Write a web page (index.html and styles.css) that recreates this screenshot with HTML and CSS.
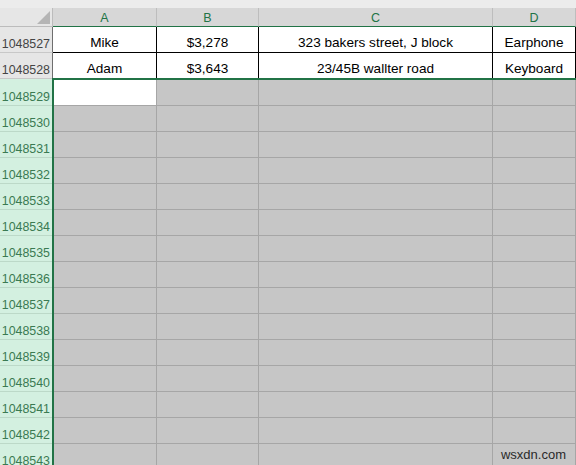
FILE: index.html
```html
<!DOCTYPE html>
<html>
<head>
<meta charset="utf-8">
<link rel="stylesheet" href="styles.css">
</head>
<body>
<div class="sheet">
  <div class="grid">
    <div class="strip"></div>

    <div class="corner"><span class="tri"></span></div>
    <div class="ch">A</div>
    <div class="ch">B</div>
    <div class="ch">C</div>
    <div class="ch">D</div>

    <div class="rh">1048527</div>
    <div class="dc">Mike</div>
    <div class="dc">$3,278</div>
    <div class="dc">323 bakers street, J block</div>
    <div class="dc">Earphone</div>

    <div class="rh">1048528</div>
    <div class="dc">Adam</div>
    <div class="dc">$3,643</div>
    <div class="dc">23/45B wallter road</div>
    <div class="dc">Keyboard</div>

    <div class="rh sel">1048529</div><div class="gc active"></div><div class="gc"></div><div class="gc"></div><div class="gc"></div>
    <div class="rh sel">1048530</div><div class="gc"></div><div class="gc"></div><div class="gc"></div><div class="gc"></div>
    <div class="rh sel">1048531</div><div class="gc"></div><div class="gc"></div><div class="gc"></div><div class="gc"></div>
    <div class="rh sel">1048532</div><div class="gc"></div><div class="gc"></div><div class="gc"></div><div class="gc"></div>
    <div class="rh sel">1048533</div><div class="gc"></div><div class="gc"></div><div class="gc"></div><div class="gc"></div>
    <div class="rh sel">1048534</div><div class="gc"></div><div class="gc"></div><div class="gc"></div><div class="gc"></div>
    <div class="rh sel">1048535</div><div class="gc"></div><div class="gc"></div><div class="gc"></div><div class="gc"></div>
    <div class="rh sel">1048536</div><div class="gc"></div><div class="gc"></div><div class="gc"></div><div class="gc"></div>
    <div class="rh sel">1048537</div><div class="gc"></div><div class="gc"></div><div class="gc"></div><div class="gc"></div>
    <div class="rh sel">1048538</div><div class="gc"></div><div class="gc"></div><div class="gc"></div><div class="gc"></div>
    <div class="rh sel">1048539</div><div class="gc"></div><div class="gc"></div><div class="gc"></div><div class="gc"></div>
    <div class="rh sel">1048540</div><div class="gc"></div><div class="gc"></div><div class="gc"></div><div class="gc"></div>
    <div class="rh sel">1048541</div><div class="gc"></div><div class="gc"></div><div class="gc"></div><div class="gc"></div>
    <div class="rh sel">1048542</div><div class="gc"></div><div class="gc"></div><div class="gc"></div><div class="gc"></div>
    <div class="rh sel">1048543</div><div class="gc"></div><div class="gc"></div><div class="gc"></div><div class="gc"><span class="wm">wsxdn.com</span></div>
  </div>
  <div class="selection"></div>
</div>
</body>
</html>
```

FILE: styles.css
```css
* { box-sizing: border-box; }
html, body { margin: 0; padding: 0; }
body {
  width: 576px;
  height: 465px;
  overflow: hidden;
  background: #c6c6c6;
  font-family: "Liberation Sans", Arial, sans-serif;
}
.sheet { position: relative; width: 576px; height: 465px; overflow: hidden; }
.grid {
  display: grid;
  grid-template-columns: 53px 104px 102px 234px 83px;
  grid-template-rows: 8px 19px 26px 26px 27px repeat(14, 26px);
}
.strip { grid-column: 1 / -1; background: #ececec; }
.corner {
  position: relative;
  background: #e6e6e6;
  border-right: 1px solid #bcbcbc;
  border-bottom: 1px solid #bcbcbc;
}
.tri {
  position: absolute;
  right: 2px;
  bottom: 2px;
  width: 0; height: 0;
  border-left: 13px solid transparent;
  border-bottom: 13px solid #b5b5b5;
}
.ch {
  background: #d7d7d7;
  border-right: 1px solid #bdbdbd;
  border-bottom: 1px solid #217346;
  color: #217346;
  font-size: 12.5px;
  display: flex;
  align-items: center;
  justify-content: center;
  padding-top: 1px;
}
.rh {
  background: #e6e6e6;
  color: #444;
  border-right: 1px solid #6e6e6e;
  border-bottom: 1px solid #c8c8c8;
  font-size: 12.4px;
  display: flex;
  align-items: flex-end;
  justify-content: flex-end;
  padding: 0 2px 1px 0;
}
.rh.sel {
  background: #d3f0e0;
  color: #3a7a52;
  border-bottom: 1px solid #bcd9c8;
}
.dc {
  background: #fff;
  color: #000;
  border-right: 1px solid #000;
  border-bottom: 1px solid #000;
  font-size: 13.6px;
  display: flex;
  align-items: flex-end;
  justify-content: center;
  padding-bottom: 2px;
}
.gc {
  position: relative;
  background: #c6c6c6;
  border-right: 1px solid #a6a6a6;
  border-bottom: 1px solid #a6a6a6;
}
.gc.active { background: #fff; }
.wm {
  position: absolute;
  right: 9px;
  bottom: 7px;
  font-size: 13px;
  color: #2a2a2a;
}
.selection {
  position: absolute;
  left: 52px;
  top: 78px;
  right: 0;
  bottom: 0;
  border-top: 2px solid #217346;
  border-left: 2px solid #217346;
  pointer-events: none;
}
```
